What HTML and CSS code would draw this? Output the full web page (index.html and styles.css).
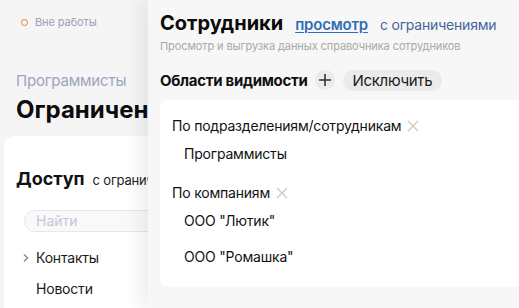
FILE: index.html
```html
<!DOCTYPE html>
<html lang="ru">
<head>
<meta charset="utf-8">
<link rel="stylesheet" href="styles.css">
</head>
<body>
<div class="page">
  <div class="status"><span class="dot"></span><span>Вне работы</span></div>
  <div class="crumb">Программисты</div>
  <h1 class="title">Ограничения доступа</h1>
  <div class="bg-card">
    <div class="access"><span class="access-title">Доступ</span><span class="access-sub">с ограничениями</span></div>
    <div class="search">Найти</div>
    <ul class="menu">
      <li class="menu-item"><svg class="chev" width="8" height="10" viewBox="0 0 8 10"><path d="M2 1.5 L5.5 5 L2 8.5" fill="none" stroke="#8a8fa6" stroke-width="1.6"/></svg>Контакты</li>
      <li class="menu-item">Новости</li>
    </ul>
  </div>
</div>

<aside class="panel">
  <div class="head">
    <span class="head-title">Сотрудники</span>
    <a class="head-link">просмотр</a>
    <span class="head-mode">с ограничениями</span>
  </div>
  <div class="subtitle">Просмотр и выгрузка данных справочника сотрудников</div>
  <div class="section">
    <span class="section-title">Области видимости</span>
    <span class="plus"><svg width="14" height="14" viewBox="0 0 14 14"><path d="M7 1v12M1 7h12" stroke="#333" stroke-width="1.6"/></svg></span>
    <span class="pill">Исключить</span>
  </div>
  <div class="card">
    <div class="group">
      <div class="group-label">По подразделениям/сотрудникам<svg class="x" width="12" height="12" viewBox="0 0 12 12"><path d="M1 1L11 11M11 1L1 11" stroke="#c9c9c9" stroke-width="1.3"/></svg></div>
      <div class="item">Программисты</div>
    </div>
    <div class="group">
      <div class="group-label">По компаниям<svg class="x" width="12" height="12" viewBox="0 0 12 12"><path d="M1 1L11 11M11 1L1 11" stroke="#c9c9c9" stroke-width="1.3"/></svg></div>
      <div class="item">ООО "Лютик"</div>
      <div class="item">ООО "Ромашка"</div>
    </div>
  </div>
</aside>
</body>
</html>
```

FILE: styles.css
```css
* { box-sizing: border-box; }
html, body { margin: 0; height: 100%; }
body {
  font-family: Inter, "Liberation Sans", sans-serif;
  background: #f5f5f6;
  color: #111;
  overflow: hidden;
  position: relative;
  width: 519px;
  height: 308px;
}
.page { padding: 15px 0 0 4px; width: 148px; height: 308px; overflow: hidden; }
.status { display: flex; align-items: center; gap: 7px; padding-left: 14px; font-size: 11px; color: #9aa0b8; height: 14px; letter-spacing: -0.1px; }
.dot { width: 7px; height: 7px; border-radius: 50%; border: 1.5px solid #f07a3a; margin-left: 3px; }
.crumb { margin-top: 43px; padding-left: 12px; font-size: 15px; color: #9ea4bc; line-height: 18px; letter-spacing: -0.2px; }
.title { margin: 6px 0 0; padding-left: 12px; font-size: 24px; font-weight: 700; line-height: 28px; white-space: nowrap; color: #0c0c0c; }
.bg-card { margin-top: 12px; background: #fff; border-radius: 10px; padding: 32px 0 0 12px; height: 200px; width: 220px; }
.access { display: flex; align-items: baseline; gap: 8px; white-space: nowrap; }
.access-title { font-size: 18px; font-weight: 700; }
.access-sub { font-size: 13px; color: #222; letter-spacing: -0.2px; }
.search { margin: 21px 0 0 8px; height: 22px; border: 1px solid #e6e7ec; border-radius: 11px; background: #f9f9fa; color: #c3c7d6; font-size: 14px; line-height: 20px; padding-left: 11px; }
.menu { list-style: none; margin: 10px 0 0; padding: 0; }
.menu-item { position: relative; padding-left: 20px; font-size: 14px; line-height: 31px; color: #1a1a1a; letter-spacing: -0.2px; }
.chev { position: absolute; left: 6px; top: 11px; }

.panel {
  position: absolute; left: 148px; top: 0; right: 0; bottom: 0;
  background: #f7f7f7;
  box-shadow: -8px 0 18px rgba(0,0,0,0.07);
  padding: 11px 0 0 12px;
}
.head { display: flex; align-items: baseline; white-space: nowrap; }
.head-title { font-size: 20px; font-weight: 700; color: #0b0b0b; }
.head-link { margin-left: 12px; font-size: 15px; font-weight: 600; color: #2e6db4; text-decoration: underline; text-underline-offset: 2px; letter-spacing: -0.2px; }
.head-mode { margin-left: 12px; font-size: 14px; color: #47659a; letter-spacing: -0.2px; }
.subtitle { margin-top: 4px; font-size: 11px; color: #a9a9a9; white-space: nowrap; letter-spacing: -0.1px; }
.section { margin-top: 16px; display: flex; align-items: center; height: 22px; }
.section-title { font-size: 15px; font-weight: 700; color: #111; white-space: nowrap; letter-spacing: -0.3px; }
.plus { margin-left: 7px; width: 20px; height: 20px; border-radius: 50%; background: #ebebeb; display: flex; align-items: center; justify-content: center; }
.pill { margin-left: 8px; height: 21px; border-radius: 11px; background: #ebebeb; font-size: 15px; line-height: 21px; padding: 0 10px; color: #1a1a1a; letter-spacing: -0.3px; }
.card { margin-top: 9px; background: #fff; border-radius: 8px 0 0 8px; padding: 16px 12px 12px; height: 187px; }
.group + .group { margin-top: 19px; }
.group-label { display: flex; align-items: center; gap: 6px; font-size: 14px; line-height: 20px; color: #111; letter-spacing: -0.2px; }
.item { padding-left: 12px; font-size: 14px; line-height: 20px; margin-top: 8px; color: #111; letter-spacing: -0.2px; }
.item + .item { margin-top: 16px; }
```
